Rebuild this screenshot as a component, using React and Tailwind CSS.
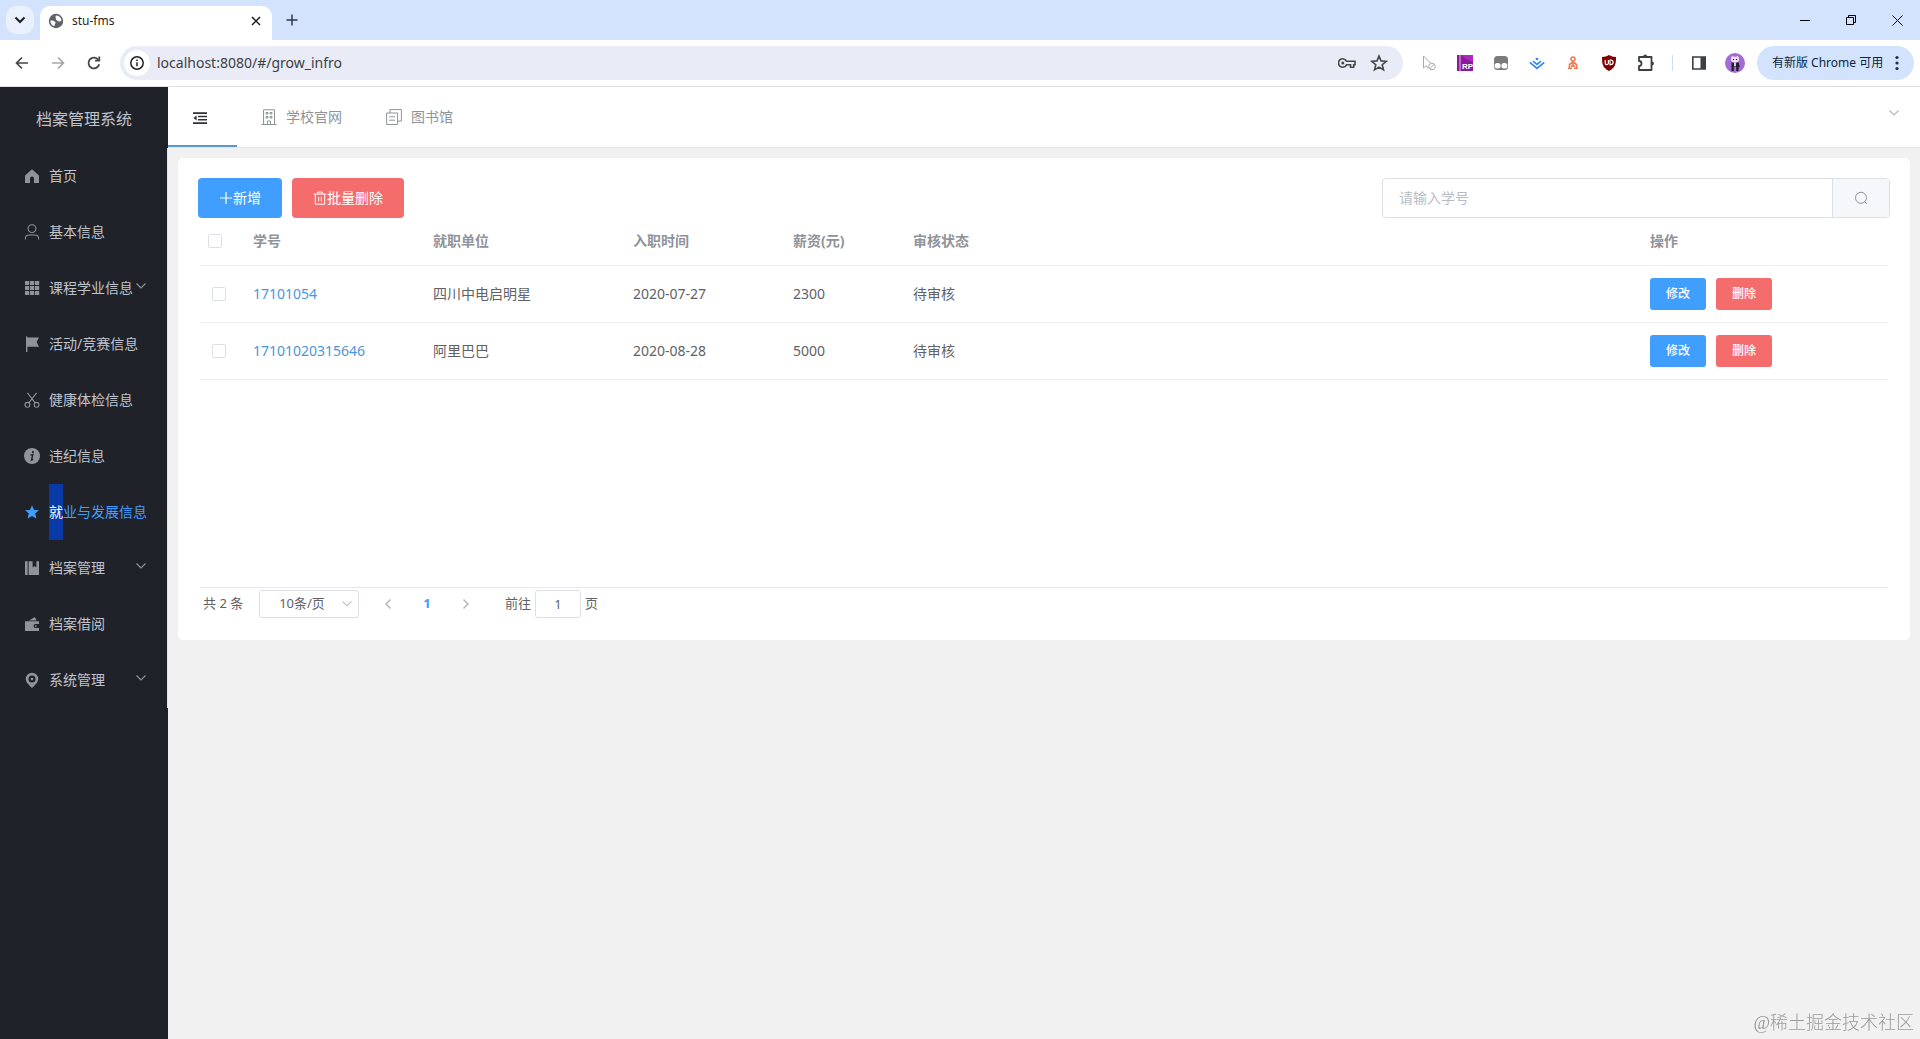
import React, { useState } from "react";

const ICON = "h-4 w-4 shrink-0";

const HomeIcon = () => (
  <svg viewBox="0 0 16 16" className={ICON} fill="currentColor">
    <path d="M8 1.2 15 7.4V15h-5v-4.4a2 2 0 0 0-4 0V15H1V7.4z" />
  </svg>
);

const UserIcon = () => (
  <svg viewBox="0 0 16 16" className={ICON} fill="none" stroke="currentColor" strokeWidth="1.1">
    <circle cx="8" cy="4.6" r="3.9" />
    <path d="M1.4 15.6v-1.2c0-2 1.6-3.4 3.6-3.4h6c2 0 3.6 1.4 3.6 3.4v1.2" />
  </svg>
);

const GridIcon = () => (
  <svg viewBox="0 0 16 16" className={ICON} fill="currentColor">
    {[1, 6, 11].map((y) => [1, 6, 11].map((x) => <rect key={`${x}-${y}`} x={x} y={y} width="4.2" height="4" />))}
  </svg>
);

const FlagIcon = () => (
  <svg viewBox="0 0 16 16" className={ICON} fill="currentColor">
    <path d="M2 .5h1.4v1H15L12.6 6l2.4 4.8H3.4V16H2z" />
  </svg>
);

const ScissorsIcon = () => (
  <svg viewBox="0 0 16 16" className={ICON} fill="none" stroke="currentColor" strokeWidth="1.1">
    <circle cx="3.4" cy="12.8" r="2.4" />
    <circle cx="12.6" cy="12.8" r="2.4" />
    <path d="M4.8 10.8 12.6.8M11.2 10.8 3.4.8" />
  </svg>
);

const InfoIcon = () => (
  <svg viewBox="0 0 16 16" className={ICON}>
    <circle cx="8" cy="8" r="8" fill="currentColor" />
    <circle cx="9" cy="4.1" r="1.1" fill="#20222a" />
    <path d="M6.4 7.1 8.8 6.6 7.5 12l1.6-.7" fill="none" stroke="#20222a" strokeWidth="1.4" />
  </svg>
);

const StarIcon = () => (
  <svg viewBox="0 0 16 16" className={ICON} fill="currentColor">
    <path d="m8 1.2 2 4.7 5 .4-3.8 3.3 1.2 5L8 12l-4.4 2.6 1.2-5L1 6.3l5-.4z" />
  </svg>
);

const ManagementIcon = () => (
  <svg viewBox="0 0 16 16" className={ICON} fill="currentColor">
    <path d="M1 1.2h2.6V15H1zM4.6 1.2h4v6.2l1.9-1.5 1.9 1.5V1.2H15V15H4.6z" />
  </svg>
);

const WalletIcon = () => (
  <svg viewBox="0 0 16 16" className={ICON} fill="currentColor">
    <path d="M1 5.2h14v2.9h-3.5a2 2 0 0 0 0 4H15V15H1zM5 4.4 10.8 1l1.9 3.4z" />
    <circle cx="11.8" cy="10.1" r="0.9" />
  </svg>
);

const LocationIcon = () => (
  <svg viewBox="0 0 16 16" className={ICON} fill="currentColor" fillRule="evenodd">
    <path d="M8 .8a6.2 6.2 0 0 1 6.2 6.2c0 3.6-3.4 6.2-6.2 9-2.8-2.8-6.2-5.4-6.2-9A6.2 6.2 0 0 1 8 .8zm0 2.7a3.5 3.5 0 1 0 0 7 3.5 3.5 0 0 0 0-7z" />
    <circle cx="8" cy="7" r="1.3" />
  </svg>
);

const Chevron = ({ className, strokeWidth = 1.1 }) => (
  <svg viewBox="0 0 12 12" className={className} fill="none" stroke="currentColor" strokeWidth={strokeWidth}>
    <path d="m1.5 3.5 4.5 4.5 4.5-4.5" />
  </svg>
);

const menuItems = [
  { label: "首页", icon: HomeIcon },
  { label: "基本信息", icon: UserIcon },
  { label: "课程学业信息", icon: GridIcon, children: true },
  { label: "活动/竞赛信息", icon: FlagIcon },
  { label: "健康体检信息", icon: ScissorsIcon },
  { label: "违纪信息", icon: InfoIcon },
  { label: "就业与发展信息", icon: StarIcon, active: true },
  { label: "档案管理", icon: ManagementIcon, children: true },
  { label: "档案借阅", icon: WalletIcon },
  { label: "系统管理", icon: LocationIcon, children: true },
];

const rows = [
  { id: "17101054", company: "四川中电启明星", date: "2020-07-27", salary: "2300", status: "待审核" },
  { id: "17101020315646", company: "阿里巴巴", date: "2020-08-28", salary: "5000", status: "待审核" },
];

const TabStrip = () => (
  <div className="flex h-10 items-end bg-[#d3e3fd] pl-1.5">
    <button aria-label="搜索标签页" className="mb-1.5 flex h-7 w-7 items-center justify-center rounded-[10px] bg-[#e9f0fe] text-[#1f1f1f]">
      <Chevron className="h-3 w-3" strokeWidth={2} />
    </button>
    <div className="ml-1.5 flex h-[34px] w-[232px] items-center rounded-t-[10px] bg-white pr-2 pb-1 pl-2">
      <svg viewBox="0 0 16 16" className="h-4 w-4">
        <circle cx="8" cy="8" r="7.2" fill="#5f6368" />
        <path d="M2.4 7.6c1.6-.2 3.4 0 4.3.9.9.8 1.400 1.600.300 2.400L6.200 13.300C4 12.700 2.200 10.600 2.400 7.600zM8.600 2.600c-1.200.400-1.500 1.300-.9 2.100.6.800-.3 1.700.8 2.300 1.200.6 1.700 1.900 3 1.400.8-.3 1.300.2 1.900-.4C13.500 5.400 11.600 2.900 8.600 2.600z" fill="#fff" />
      </svg>
      <span className="ml-2 flex-1 text-xs text-[#1f1f1f]">stu-fms</span>
      <button aria-label="关闭标签页" className="flex h-4 w-4 items-center justify-center text-[#1f1f1f]">
        <svg viewBox="0 0 10 10" className="h-2.5 w-2.5" stroke="currentColor" strokeWidth="1.5">
          <path d="m1 1 8 8M9 1 1 9" />
        </svg>
      </button>
    </div>
    <button aria-label="新标签页" className="mb-2 ml-2 flex h-6 w-6 items-center justify-center text-[#303a4b]">
      <svg viewBox="0 0 12 12" className="h-3 w-3" stroke="currentColor" strokeWidth="1.5">
        <path d="M6 .5v11M.5 6h11" />
      </svg>
    </button>
    <div className="ml-auto flex h-10 items-center text-black">
      <button aria-label="最小化" className="flex w-[46px] justify-center">
        <svg viewBox="0 0 10 10" className="h-2.5 w-2.5" stroke="currentColor">
          <path d="M0 5.5h10" />
        </svg>
      </button>
      <button aria-label="还原" className="flex w-[46px] justify-center">
        <svg viewBox="0 0 10 10" className="h-2.5 w-2.5" fill="none" stroke="currentColor">
          <path d="M.5 2.5h7v7h-7zM2.5 2.5v-2h7v7h-2" />
        </svg>
      </button>
      <button aria-label="关闭" className="flex w-[46px] justify-center">
        <svg viewBox="0 0 11 11" className="h-[11px] w-[11px]" stroke="currentColor">
          <path d="m.5.5 10 10M10.5.5l-10 10" />
        </svg>
      </button>
    </div>
  </div>
);

const Extensions = () => (
  <div className="flex items-center gap-5 pl-[18px]">
    <svg viewBox="0 0 16 16" className="h-4 w-4" fill="none" stroke="#a9abae">
      <path d="M2.5 1v12l3-2.5L7 13.500M2.5 1 9.500 8" />
      <circle cx="11" cy="11.5" r="3.3" />
      <path d="m8.8 13.8 4.4-4.6" />
    </svg>
    <svg viewBox="0 0 16 16" className="h-4 w-4">
      <path d="M0 0h16v16H0z" fill="#8a1a9b" />
      <path d="M4 0h12v7L9 4z" fill="#a92bc0" />
      <path d="M2.5 0h1v16h-1z" fill="#e3b5ea" />
      <text x="5" y="14" fontSize="8" fontWeight="700" fontFamily="Liberation Sans" fill="#fff">RP</text>
    </svg>
    <svg viewBox="0 0 16 16" className="h-4 w-4">
      <rect x="1" y="1" width="14" height="14" rx="3.5" fill="#7b7b7b" />
      <rect x="1.6" y="8" width="6" height="5.5" rx="2.5" fill="#fff" />
      <rect x="8.4" y="8" width="6" height="5.5" rx="2.5" fill="#fff" />
    </svg>
    <svg viewBox="0 0 16 16" className="h-4 w-4" fill="none" stroke="#2f86f2" strokeWidth="1.6">
      <path d="m.8 7.4 7.2 6 7.2-6M4 6.2l4 3.200 4-3.200" />
      <path d="m8 2.400 1.800 1.500L8 5.400 6.200 3.900z" fill="#2f86f2" stroke="none" />
    </svg>
    <svg viewBox="0 0 16 16" className="h-4 w-4" fill="none" stroke="#f0784f" strokeWidth="1.6">
      <circle cx="8" cy="4" r="2" />
      <path d="M8 6v6M4.500 9.500 8 7l3.500 2.500M4.500 9v5M11.500 9v5M3 13.200h4M9 13.200h4M6 11h4" />
    </svg>
    <svg viewBox="0 0 16 16" className="h-4 w-4">
      <path d="M8 0c2 1.300 4 2 7 2 0 7-.5 10.500-7 14C1.500 12.500 1 9 1 2c3 0 5-.7 7-2z" fill="#800000" />
      <path d="M4.200 5v3a1.600 1.600 0 0 0 3.200 0V5M9 5v4.600h.8a2.300 2.300 0 0 0 0-4.600z" fill="none" stroke="#fff" strokeWidth="1.2" />
    </svg>
    <svg viewBox="0 0 18 18" className="h-[18px] w-[18px]" fill="none" stroke="#3c4043" strokeWidth="1.800">
      <path d="M2 3h12.500v13H2v-4a2.500 2.500 0 0 0 0-5z" strokeLinejoin="round" />
      <path d="M6.300 2.500a1.900 1.900 0 0 1 3.800 0zM15 7.600a1.900 1.900 0 0 1 0 3.800z" fill="#3c4043" stroke="none" />
    </svg>
  </div>
);

const Toolbar = () => (
  <div className="flex h-[47px] items-center border-b border-[#dcdfe3] bg-white pr-1.5 pl-3.5 text-[#474747]">
    <div className="flex w-[106px] shrink-0 items-center gap-5">
      <svg viewBox="0 0 16 16" className="h-4 w-4" fill="none" stroke="currentColor" strokeWidth="1.7">
        <path d="M14 8H3M8 2.500 2.500 8 8 13.500" />
      </svg>
      <svg viewBox="0 0 16 16" className="h-4 w-4" fill="none" stroke="#a6a6a6" strokeWidth="1.7">
        <path d="M2 8h11M8 2.500 13.500 8 8 13.500" />
      </svg>
      <svg viewBox="0 0 16 16" className="h-4 w-4" fill="none" stroke="currentColor" strokeWidth="1.8">
        <path d="M13.200 9.200A5.400 5.400 0 1 1 12.400 5" />
        <path d="M13.300 1.500v4.200H9.100" />
      </svg>
    </div>
    <div className="flex h-[34px] flex-1 items-center rounded-full bg-[#e9ecf7] pr-[15px] pl-1">
      <span className="flex h-[26px] w-[26px] items-center justify-center rounded-full bg-white">
        <svg viewBox="0 0 16 16" className="h-4 w-4" fill="none" stroke="#1f1f1f" strokeWidth="1.5">
          <circle cx="8" cy="8" r="6.2" />
          <path d="M8 7.200v4M8 4.400V6" />
        </svg>
      </span>
      <input
        aria-label="地址栏"
        defaultValue="localhost:8080/#/grow_infro"
        className="ml-[7px] flex-1 bg-transparent text-sm text-[#3c4043] outline-none"
      />
      <svg viewBox="0 0 18 18" className="h-[18px] w-[18px]" fill="none" stroke="currentColor" strokeWidth="1.6">
        <path d="M8.500 7.200H17v3.600h-1.300v2.400h-3.200v-2.400h-4a4.200 4.200 0 1 1 0-3.600z" />
        <circle cx="4.8" cy="9" r="1.5" fill="currentColor" stroke="none" />
      </svg>
      <svg viewBox="0 0 18 18" className="ml-3.5 h-[18px] w-[18px]" fill="none" stroke="currentColor" strokeWidth="1.6">
        <path d="m9 2 2 4.900 5.300.4-4.100 3.400 1.300 5.200L9 13.100l-4.500 2.800 1.300-5.200-4.100-3.400L7 6.900z" />
      </svg>
    </div>
    <Extensions />
    <span className="ml-[17px] h-4 w-px bg-[#cfdcf5]" />
    <svg viewBox="0 0 16 16" className="ml-[18px] h-4 w-4">
      <path d="M1.800 2h12.400v12H1.800z" fill="none" stroke="#3c4043" strokeWidth="1.6" />
      <path d="M9.500 2H14v12H9.500z" fill="#3c4043" />
    </svg>
    <svg viewBox="0 0 20 20" className="ml-[18px] h-5 w-5">
      <circle cx="10" cy="10" r="10" fill="#a36bd6" />
      <path d="M6.200 4.200 7.500 3l1.500.8h2L12.500 3l1.300 1.200.2 3.300c-.8 1.500-2.200 2-4 2s-3.200-.5-4-2z" fill="#efe4ee" />
      <circle cx="8.500" cy="6.500" r="0.7" fill="#231c2c" />
      <circle cx="11.500" cy="6.500" r="0.700" fill="#231c2c" />
      <path d="M6.500 9.300c2 .900 5 .900 7 0l1.300 4.700-1.300.5V18h-2.300v-4.500H8.800V18H6.500z" fill="#231c2c" />
      <path d="M9.200 9.800h1.600V13H9.200z" fill="#fff" />
    </svg>
    <button className="ml-3 flex h-[34px] w-[157px] items-center justify-between rounded-full bg-[#d3e3fd] pr-[15px] pl-[15px] text-xs text-[#0a2540]">
      有新版 Chrome 可用
      <svg viewBox="0 0 4 16" className="h-4 w-1" fill="#1f2d45">
        <circle cx="2" cy="2.5" r="1.6" />
        <circle cx="2" cy="8" r="1.6" />
        <circle cx="2" cy="13.5" r="1.6" />
      </svg>
    </button>
  </div>
);

const Sidebar = () => (
  <aside className="w-[168px] shrink-0 bg-[#20222a] text-[#c0c4cc]">
    <h1 className="h-[61px] pt-0.5 text-center text-base leading-[60px]">档案管理系统</h1>
    <nav className="border-r border-[#e6e6e6]">
      {menuItems.map(({ label, icon: Icon, children, active }) => (
        <a
          key={label}
          href="#/"
          className={`flex h-14 items-center pr-5 pl-6 text-sm ${active ? "text-[#409eff]" : ""}`}
        >
          <span className={active ? "" : "text-[#909399]"}>
            <Icon />
          </span>
          <span className="ml-[9px] leading-[56px] whitespace-nowrap">
            {active ? (
              <>
                <span className="inline-block h-14 bg-[#0a3aa8] align-top text-white">{label[0]}</span>
                {label.slice(1)}
              </>
            ) : (
              label
            )}
          </span>
          {children && <Chevron className="mb-1 ml-auto h-3 w-3 shrink-0 text-[#909399]" />}
        </a>
      ))}
    </nav>
  </aside>
);

const TopNav = () => (
  <header className="flex h-[61px] items-stretch border-b border-[#e6e6e6] bg-white text-sm text-[#909399]">
    <button aria-label="收起菜单" className="flex w-[69px] items-center justify-center border-b-2 border-[#5a9bcb] pt-1 pr-1.5 text-[#303133]">
      <svg viewBox="0 0 14 14" className="h-3.5 w-3.5" fill="currentColor">
        <path d="M0 1.200h14V3H0zM5 4.800h9v1.500H5zM5 8h9v1.500H5zM0 11.200h14V13H0zM3.600 4.500v5L.4 7z" />
      </svg>
    </button>
    <a href="#/school" className="flex items-center pl-6">
      <svg viewBox="0 0 16 16" className="h-4 w-4" fill="none" stroke="currentColor">
        <path d="M2.500 15.500V.8h11v14.700M.5 15.500h15M6.500 15.500v-3.500h3v3.500M5 3.500h2v1.500H5zM9 3.500h2v1.500H9zM5 7.500h2V9H5zM9 7.500h2V9H9z" />
      </svg>
      <span className="ml-[9px]">学校官网</span>
    </a>
    <a href="#/library" className="flex items-center pl-11">
      <svg viewBox="0 0 16 16" className="h-4 w-4" fill="none" stroke="currentColor">
        <path d="M.6 4h11v11.500H.6zM4 4V.6h11.400v11.500h-3.800M3.200 7.800H9M3.200 11.200H9" />
      </svg>
      <span className="ml-[9px]">图书馆</span>
    </a>
    <button aria-label="更多" className="mb-2 ml-auto w-[52px] text-[#b4b7bd]">
      <Chevron className="mx-auto h-3 w-3" />
    </button>
  </header>
);

const Checkbox = ({ label }) => (
  <input
    type="checkbox"
    aria-label={label}
    className="block h-3.5 w-3.5 appearance-none rounded-xs border border-[#dcdfe6] bg-white checked:bg-[#409eff]"
  />
);

const DataTable = () => (
  <div className="mx-0.5 h-[370px] border-b border-[#e6e8ec]">
    <table className="w-full table-fixed border-collapse text-left text-sm text-[#606266]">
      <colgroup>
        <col className="w-[43px]" />
        <col className="w-[180px]" />
        <col className="w-[200px]" />
        <col className="w-[160px]" />
        <col className="w-[120px]" />
        <col />
        <col className="w-[248px]" />
      </colgroup>
      <thead>
        <tr className="h-[47px] border-b border-[#ebeef5] text-[#909399]">
          <th className="pl-2">
            <Checkbox label="全选" />
          </th>
          {["学号", "就职单位", "入职时间", "薪资(元)", "审核状态", "操作"].map((title) => (
            <th key={title} className="px-2.5 font-bold">{title}</th>
          ))}
        </tr>
      </thead>
      <tbody>
        {rows.map((row) => (
          <tr key={row.id} className="h-[57px] border-b border-[#ebeef5]">
            <td className="pl-3">
              <Checkbox label={row.id} />
            </td>
            <td className="px-2.5">
              <a href="#/detail" className="text-[#4a96dc]">{row.id}</a>
            </td>
            <td className="px-2.5">{row.company}</td>
            <td className="px-2.5">{row.date}</td>
            <td className="px-2.5">{row.salary}</td>
            <td className="px-2.5">{row.status}</td>
            <td className="px-2.5">
              <div className="flex gap-2.5 text-xs font-medium text-white">
                <button className="h-8 w-14 rounded-[3px] bg-[#409eff]">修改</button>
                <button className="h-8 w-14 rounded-[3px] bg-[#f56c6c]">删除</button>
              </div>
            </td>
          </tr>
        ))}
      </tbody>
    </table>
  </div>
);

const Pagination = () => {
  const [page, setPage] = useState("1");

  return (
    <div className="flex h-8 items-center px-[5px] text-[13px] text-[#606266]">
      <span className="w-14">共 2 条</span>
      <div className="relative">
        <select
          aria-label="每页条数"
          className="h-7 w-[100px] appearance-none rounded-[3px] border border-[#dcdfe6] bg-white pr-3.5 text-center"
        >
          <option>10条/页</option>
        </select>
        <Chevron className="pointer-events-none absolute top-2 right-1.5 h-3 w-3 text-[#c0c4cc]" />
      </div>
      <button aria-label="上一页" className="ml-[23px] text-[#b4b8bf]">
        <Chevron className="h-3 w-3 rotate-90" strokeWidth={1.5} />
      </button>
      <button className="w-[66px] text-center font-bold text-[#409eff]">{page}</button>
      <button aria-label="下一页" className="text-[#b4b8bf]">
        <Chevron className="h-3 w-3 -rotate-90" strokeWidth={1.5} />
      </button>
      <label className="ml-[33px] flex items-center gap-1">
        前往
        <input
          value={page}
          onChange={(e) => setPage(e.target.value)}
          className="h-7 w-[46px] rounded-[3px] border border-[#dcdfe6] text-center"
        />
        页
      </label>
    </div>
  );
};

const App = () => {
  return (
    <div className="flex min-h-screen flex-col bg-[#f1f1f1] font-['Noto_Sans','Noto_Sans_CJK_SC',sans-serif]">
      <TabStrip />
      <Toolbar />
      <div className="flex flex-1">
        <Sidebar />
        <div className="flex min-w-0 flex-1 flex-col">
          <TopNav />
          <main className="flex-1 p-2.5">
            <section className="rounded-[5px] bg-white p-5">
              <div className="flex items-center gap-2.5 text-sm text-white">
                <button className="flex h-10 items-center rounded bg-[#409eff] px-[21px]">
                  <svg viewBox="0 0 14 14" className="h-3.5 w-3.5" stroke="currentColor" strokeWidth="1.2">
                    <path d="M7 1v12M1 7h12" />
                  </svg>
                  新增
                </button>
                <button className="flex h-10 items-center rounded bg-[#f56c6c] px-[21px]">
                  <svg viewBox="0 0 14 14" className="h-3.5 w-3.5" fill="none" stroke="currentColor">
                    <path d="M.8 3h12.400M2.300 3v10.200h9.400V3M4.800 3V1h4.400v2M5.700 5.800v4.600M8.300 5.800v4.600" />
                  </svg>
                  批量删除
                </button>
                <form className="ml-auto flex h-10 w-[508px] overflow-hidden rounded border border-[#dcdfe6]">
                  <input
                    aria-label="学号"
                    placeholder="请输入学号"
                    className="min-w-0 flex-1 px-4 text-sm text-[#606266] outline-none placeholder:text-[#b8bcc4]"
                  />
                  <button
                    type="button"
                    aria-label="搜索"
                    className="flex w-[57px] items-center justify-center border-l border-[#dcdfe6] bg-[#f5f7fa] text-[#909399]"
                  >
                    <svg viewBox="0 0 14 14" className="h-3.5 w-3.5" fill="none" stroke="currentColor">
                      <circle cx="7" cy="6.8" r="5.5" />
                      <path d="m10.500 10.500 2.300 2.300" />
                    </svg>
                  </button>
                </form>
              </div>
              <DataTable />
              <Pagination />
            </section>
          </main>
        </div>
      </div>
      {/* watermark over the page */}
      <p className="pointer-events-none fixed right-1.5 bottom-1 font-['Liberation_Serif','Noto_Sans_CJK_SC',serif] text-lg leading-6 font-light text-[#9a9a9a]">
        @稀土掘金技术社区
      </p>
    </div>
  );
};

export default App;
